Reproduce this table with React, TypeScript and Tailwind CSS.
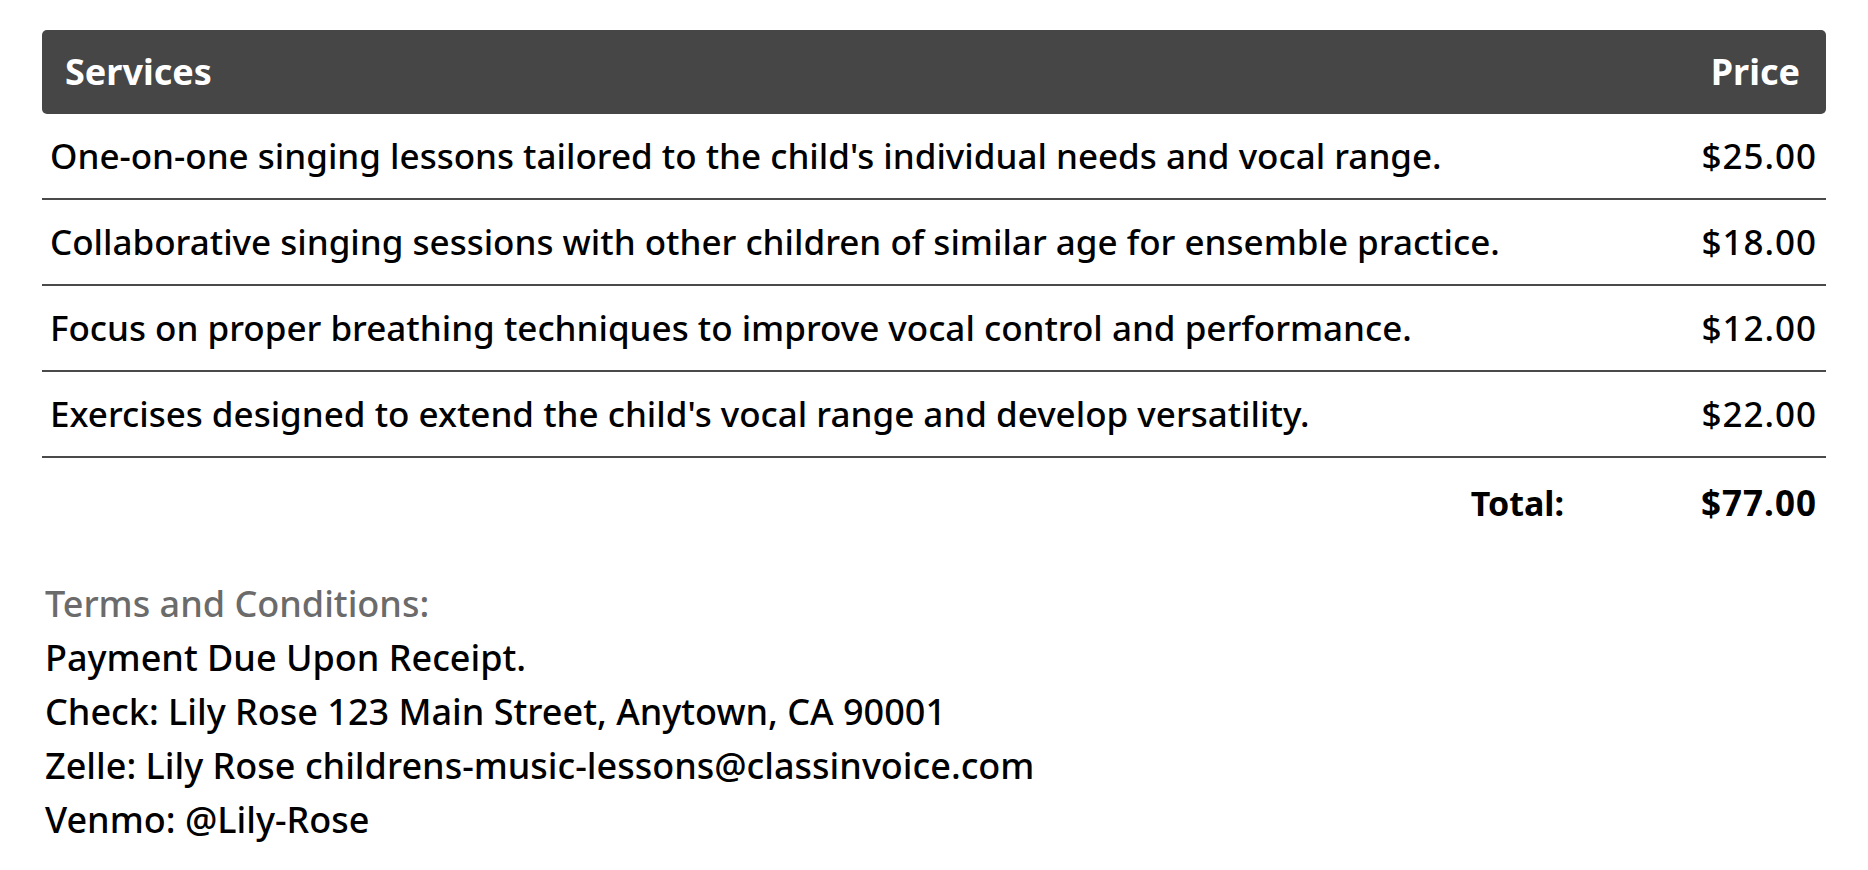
import React from "react";

const rows = [
  ["One-on-one singing lessons tailored to the child's individual needs and vocal range.", "$25.00"],
  ["Collaborative singing sessions with other children of similar age for ensemble practice.", "$18.00"],
  ["Focus on proper breathing techniques to improve vocal control and performance.", "$12.00"],
  ["Exercises designed to extend the child's vocal range and develop versatility.", "$22.00"],
];

export default function App() {
  return (
    <div
      className="w-[1868px] h-[870px] bg-white text-black px-[42px] pt-[30px]"
      style={{ fontFamily: '"Noto Sans", sans-serif' }}
    >
      <div className="flex items-center justify-between h-[84px] bg-[#464646] rounded-[5px] pl-[23px] pr-[26px] text-white font-bold text-[36px]">
        <span>Services</span>
        <span>Price</span>
      </div>
      {rows.map(([d, p]) => (
        <div
          key={d}
          className="flex items-center justify-between h-[86px] border-b-2 border-[#4a4a4a] pl-[8px] pr-[9px] text-[35px] font-medium"
        >
          <span>{d}</span>
          <span className="tracking-[1px]">{p}</span>
        </div>
      ))}
      <div className="flex items-center justify-end h-[90px] pr-[9px] text-[35px] font-bold">
        <span className="text-[34px]">Total:</span>
        <span className="w-[253px] text-right tracking-[1px]">$77.00</span>
      </div>
      <div className="pl-[3px] pt-[29px] text-[36px] font-medium leading-[54px]">
        <div className="text-[#6b6b6b]">Terms and Conditions:</div>
        <div>Payment Due Upon Receipt.</div>
        <div>Check: Lily Rose 123 Main Street, Anytown, CA 90001</div>
        <div>Zelle: Lily Rose childrens-music-lessons@classinvoice.com</div>
        <div>Venmo: @Lily-Rose</div>
      </div>
    </div>
  );
}
